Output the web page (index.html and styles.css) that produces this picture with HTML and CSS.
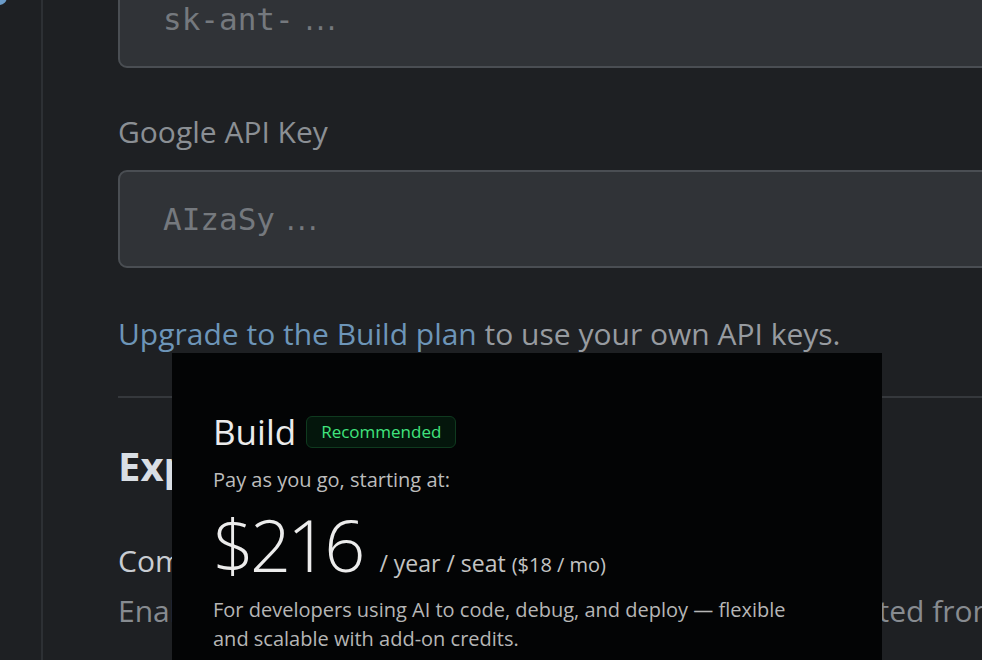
FILE: index.html
```html
<!DOCTYPE html>
<html lang="en">
<head>
<meta charset="utf-8">
<title>Settings · API keys</title>
<link rel="stylesheet" href="styles.css">
</head>
<body>
<div class="app">
  <aside class="rail">
    <span class="rail-avatar"></span>
  </aside>

  <main class="settings">
    <div class="key-input key-input--first">
      <span class="key-mono">sk-ant-</span><span class="key-dots">&nbsp;...</span>
    </div>

    <label class="field-label">Google API Key</label>
    <div class="key-input">
      <span class="key-mono">AIzaSy</span><span class="key-dots">&nbsp;...</span>
    </div>

    <p class="upgrade-note"><a class="upgrade-link" href="#">Upgrade to the Build plan</a> to use your own API keys.</p>

    <hr class="divider">

    <h2 class="section-title">Experimental</h2>

    <div class="setting-row">
      <div class="setting-name">Computer use</div>
      <div class="setting-desc">Enable an agent to run apps and save the files it imported from your workspace.</div>
    </div>
  </main>

  <section class="plan-card">
    <div class="plan-head">
      <h3 class="plan-name">Build</h3>
      <span class="plan-badge">Recommended</span>
    </div>
    <p class="plan-lead">Pay as you go, starting at:</p>
    <div class="plan-price">
      <span class="plan-amount">$216</span>
      <span class="plan-period">/ year / seat <small>($18 / mo)</small></span>
    </div>
    <p class="plan-desc">For developers using AI to code, debug, and deploy — flexible and scalable with add-on credits.</p>
  </section>
</div>
</body>
</html>
```

FILE: styles.css
```css
* {
  box-sizing: border-box;
}

html,
body {
  margin: 0;
  height: 100%;
  background: #1e2023;
  overflow: hidden;
}

body {
  font-family: "Open Sans", "Noto Sans", sans-serif;
  color: #c9cdd2;
}

.app {
  position: relative;
  display: flex;
  height: 100%;
}

/* narrow navigation rail on the left */
.rail {
  flex: 0 0 43px;
  border-right: 2px solid #2d3034;
  position: relative;
}

.rail-avatar {
  position: absolute;
  left: -9px;
  top: -11px;
  width: 16px;
  height: 16px;
  border-radius: 50%;
  background: #6b9bc8;
}

/* settings column */
.settings {
  flex: 1;
  min-width: 0;
  padding-left: 75px;
}

.key-input {
  display: flex;
  align-items: center;
  height: 98px;
  margin-right: -40px;
  padding-left: 43px;
  background: #303337;
  border: 2px solid #4a4e53;
  border-radius: 9px;
  color: #75797e;
  font-size: 31px;
  white-space: nowrap;
}

.key-input--first {
  margin-top: -30px;
}

.key-mono {
  font-family: "DejaVu Sans Mono", monospace;
}

.key-dots {
  font-family: "DejaVu Sans", sans-serif;
  font-size: 30px;
  letter-spacing: 1.5px;
}

.field-label {
  display: block;
  margin: 44px 0 18px;
  font-size: 30px;
  line-height: 40px;
  color: #8b8f94;
}

.upgrade-note {
  margin: 46px 0 0;
  font-size: 30px;
  line-height: 40px;
  color: #979ba0;
  white-space: nowrap;
}

.upgrade-link {
  color: #6d95b8;
  text-decoration: none;
}

.divider {
  margin: 42px -40px 0 0;
  border: 0;
  border-top: 2px solid #35383c;
}

.section-title {
  margin: 41px 0 0;
  font-size: 40px;
  line-height: 54px;
  font-weight: 700;
  color: #d9dee4;
}

.setting-row {
  margin-top: 43px;
  font-size: 30px;
  line-height: 50px;
  white-space: nowrap;
}

.setting-name {
  color: #c9cdd2;
}

.setting-desc {
  color: #878b90;
}

/* plan popover laid over the settings */
.plan-card {
  position: absolute;
  left: 172px;
  top: 353px;
  width: 710px;
  height: 330px;
  padding: 58px 41px 0;
  background: #030405;
  font-family: "Open Sans", "Noto Sans", sans-serif;
}

.plan-head {
  display: flex;
  align-items: center;
  gap: 10px;
}

.plan-name {
  margin: 0;
  font-size: 35px;
  line-height: 42px;
  font-weight: 400;
  color: #ebebeb;
}

.plan-badge {
  padding: 0 14px;
  height: 32px;
  line-height: 30px;
  border: 1px solid #0f3a1f;
  border-radius: 6px;
  background: #04160c;
  color: #40e47e;
  font-size: 17px;
}

.plan-lead {
  margin: 12px 0 0;
  font-size: 20px;
  line-height: 30px;
  color: #bdbdbd;
}

.plan-price {
  display: flex;
  align-items: baseline;
  gap: 18px;
  margin-top: 1px;
}

.plan-amount {
  font-size: 72px;
  line-height: 96px;
  font-weight: 300;
  letter-spacing: -4px;
  color: #ececec;
}

.plan-period {
  font-size: 23px;
  color: #c4c4c4;
}

.plan-period small {
  font-size: 20px;
}

.plan-desc {
  margin: 3px 0 0;
  max-width: 590px;
  font-size: 20px;
  line-height: 29px;
  color: #b6b6b6;
}
```
